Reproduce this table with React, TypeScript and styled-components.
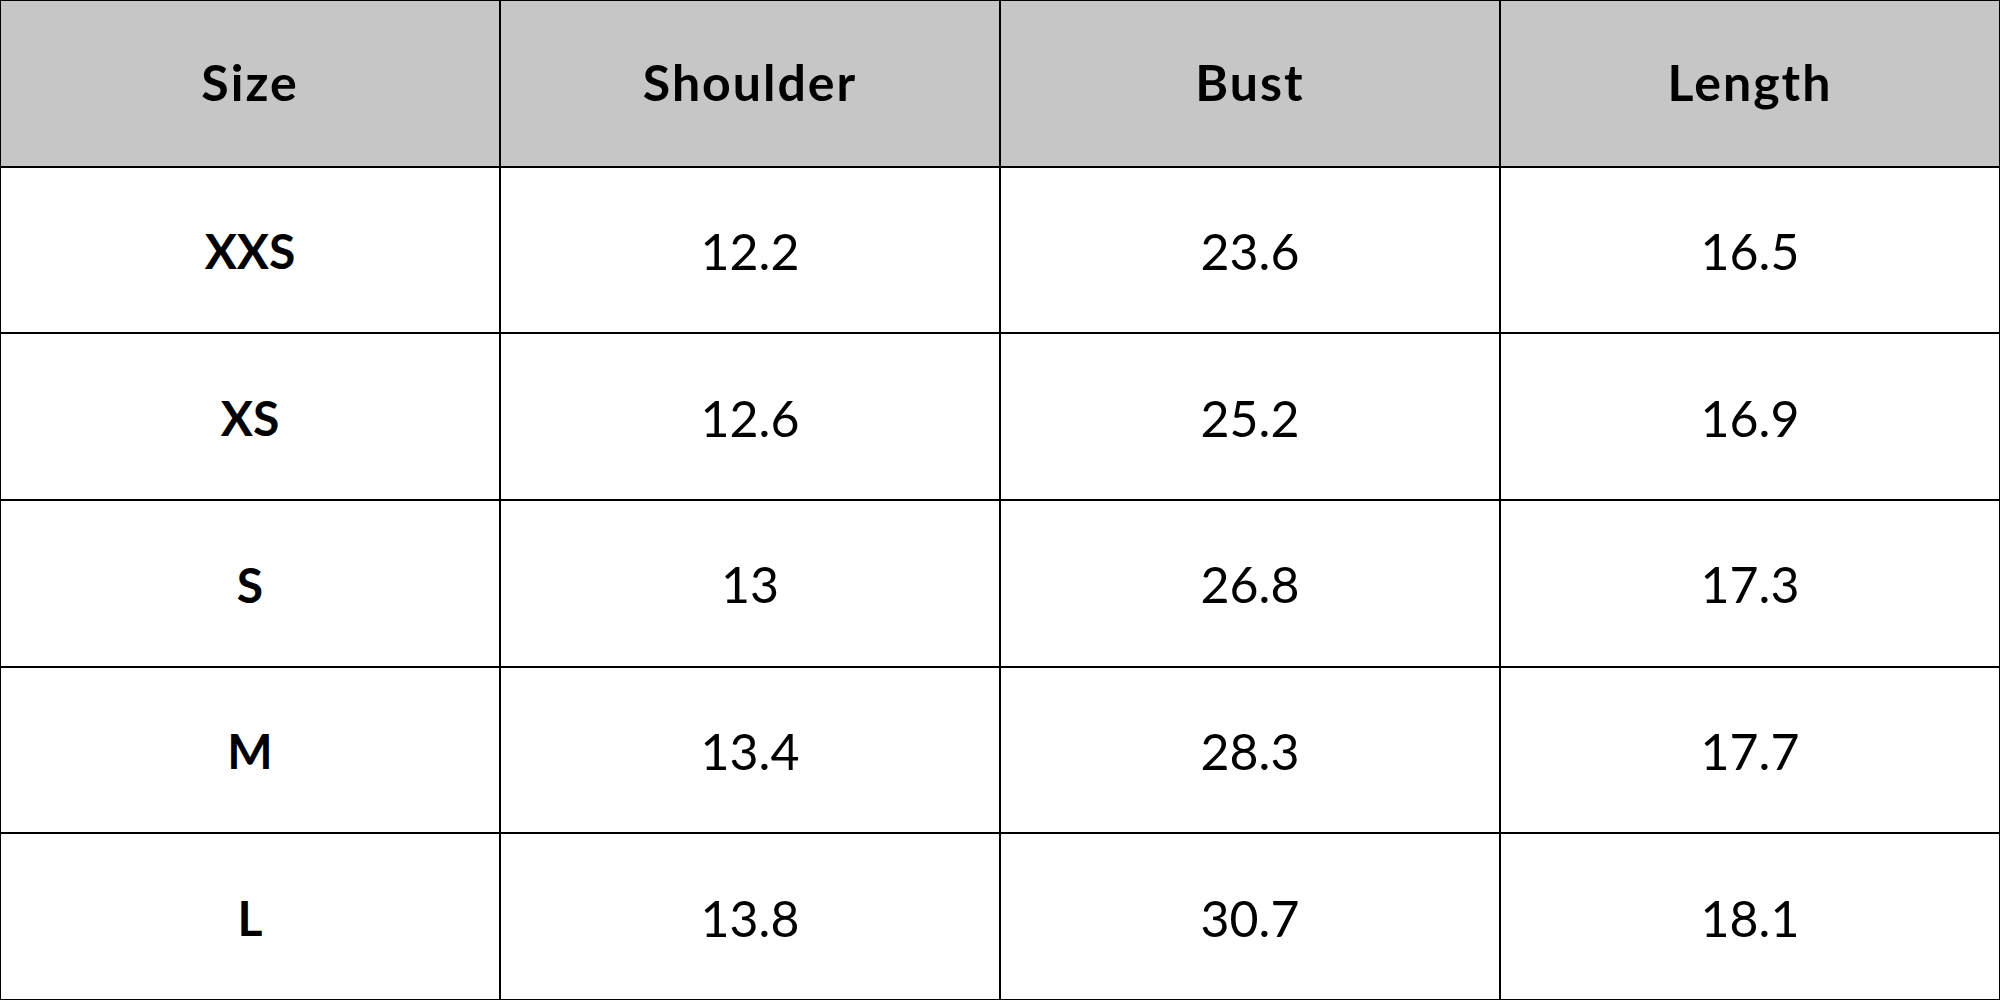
import React from "react";
import styled, { createGlobalStyle } from "styled-components";

const Global = createGlobalStyle`
  html, body { margin: 0; padding: 0; background: #ffffff; }
  body { font-family: "Lato", "Liberation Sans", sans-serif; }
`;

const Grid = styled.div`
  width: 2000px;
  height: 1000px;
  box-sizing: border-box;
  padding: 1px;
  background: #000000;
  display: grid;
  grid-template-columns: repeat(4, 1fr);
  grid-template-rows: repeat(6, 1fr);
  gap: 2px;
`;

const Cell = styled.div<{ $head?: boolean; $bold?: boolean }>`
  background: ${(p) => (p.$head ? "#c6c6c6" : "#ffffff")};
  display: flex;
  align-items: center;
  justify-content: center;
  color: #000000;
  font-family: "Lato", "Liberation Sans", sans-serif;
  font-size: ${(p) => (p.$head ? "50px" : p.$bold ? "48px" : "50px")};
  font-weight: ${(p) => (p.$head || p.$bold ? 700 : 400)};
  letter-spacing: ${(p) => (p.$head ? "2px" : "0")};
  padding-top: ${(p) => (p.$head ? "0" : "2px")};
  padding-bottom: ${(p) => (p.$head ? "3px" : "0")};
`;

const headers = ["Size", "Shoulder", "Bust", "Length"];
const rows = [
  ["XXS", "12.2", "23.6", "16.5"],
  ["XS", "12.6", "25.2", "16.9"],
  ["S", "13", "26.8", "17.3"],
  ["M", "13.4", "28.3", "17.7"],
  ["L", "13.8", "30.7", "18.1"],
];

export default function App() {
  return (
    <>
      <Global />
      <Grid>
        {headers.map((h) => (
          <Cell key={h} $head>
            {h}
          </Cell>
        ))}
        {rows.map((r) =>
          r.map((v, i) => (
            <Cell key={r[0] + i} $bold={i === 0}>
              {v}
            </Cell>
          ))
        )}
      </Grid>
    </>
  );
}
